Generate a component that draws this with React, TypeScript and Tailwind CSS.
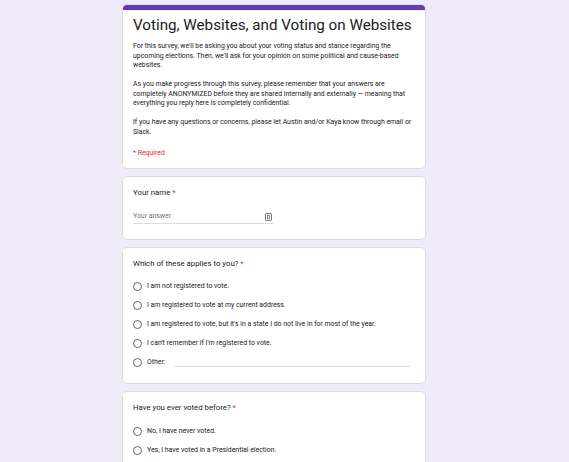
const Req = () => <span className="text-[#d93025]"> *</span>;

const Radio = ({ label, other }: { label: string; other?: boolean }) => (
  <div className="flex items-center h-[19px]">
    <span className="w-[9px] h-[9px] rounded-full border-[1.2px] border-[#5f6368] shrink-0" />
    <span className="ml-[5px] text-[6.9px] text-[#202124]">{label}</span>
    {other && <span className="ml-[9px] flex-1 mr-[4px] border-b border-[#dadce0] h-[9px]" />}
  </div>
);

const Card = ({ children, className = "" }: { children: React.ReactNode; className?: string }) => (
  <div className={`bg-white rounded-[5px] border border-[#dadce0] px-[10px] ${className}`}>{children}</div>
);

export default function App() {
  return (
    <div className="h-[462px] overflow-hidden bg-[#f0ebf8] font-['Roboto',sans-serif]">
      <div className="ml-[122px] w-[304px] pt-[4px] flex flex-col gap-[7px]">
        <div className="bg-white rounded-[5px] border border-[#dadce0] overflow-hidden">
          <div className="h-[5px] bg-[#673ab7]" />
          <div className="px-[10px] pt-[5px] pb-[10px]">
            <h1 className="text-[15.2px] leading-[20px] whitespace-nowrap text-[#202124]">
              Voting, Websites, and Voting on Websites
            </h1>
            <div className="mt-[7px] text-[6.9px] leading-[9.5px] text-[#202124]">
              <p>
                For this survey, we'll be asking you about your voting status and stance regarding the upcoming
                elections. Then, we'll ask for your opinion on some political and cause-based websites.
              </p>
              <p className="mt-[9.5px]">
                As you make progress through this survey, please remember that your answers are completely
                ANONYMIZED before they are shared internally and externally — meaning that everything you reply
                here is completely confidential.
              </p>
              <p className="mt-[9.5px]">
                If you have any questions or concerns, please let Austin and/or Kaya know through email or Slack.
              </p>
            </div>
            <div className="mt-[11.5px] text-[6.9px] leading-[9.5px] text-[#d93025]">* Required</div>
          </div>
        </div>

        <Card className="pt-[10px] pb-[15px]">
          <div className="text-[7.8px] leading-[12px] text-[#202124]">
            Your name<Req />
          </div>
          <div className="mt-[13px] w-[140px] border-b border-[#dadce0] flex items-center justify-between pb-[2px]">
            <span className="text-[6.9px] leading-[9px] text-[#70757a]">Your answer</span>
            <svg width="7" height="8" viewBox="0 0 7 8" className="mr-[1px]">
              <rect x="0.5" y="0.5" width="6" height="7" rx="0.8" fill="none" stroke="#5f6368" strokeWidth="0.9" />
              <rect x="2.5" y="2.2" width="2" height="3.6" fill="none" stroke="#5f6368" strokeWidth="0.7" />
            </svg>
          </div>
        </Card>

        <Card className="pt-[10px] pb-[11px]">
          <div className="text-[7.8px] leading-[12px] text-[#202124]">
            Which of these applies to you?<Req />
          </div>
          <div className="mt-[7px] flex flex-col">
            <Radio label="I am not registered to vote." />
            <Radio label="I am registered to vote at my current address." />
            <Radio label="I am registered to vote, but it's in a state I do not live in for most of the year." />
            <Radio label="I can't remember if I'm registered to vote." />
            <Radio label="Other:" other />
          </div>
        </Card>

        <Card className="pt-[10px] pb-[20px]">
          <div className="text-[7.8px] leading-[12px] text-[#202124]">
            Have you ever voted before?<Req />
          </div>
          <div className="mt-[7.5px] flex flex-col">
            <Radio label="No, I have never voted." />
            <Radio label="Yes, I have voted in a Presidential election." />
          </div>
        </Card>
      </div>
    </div>
  );
}
